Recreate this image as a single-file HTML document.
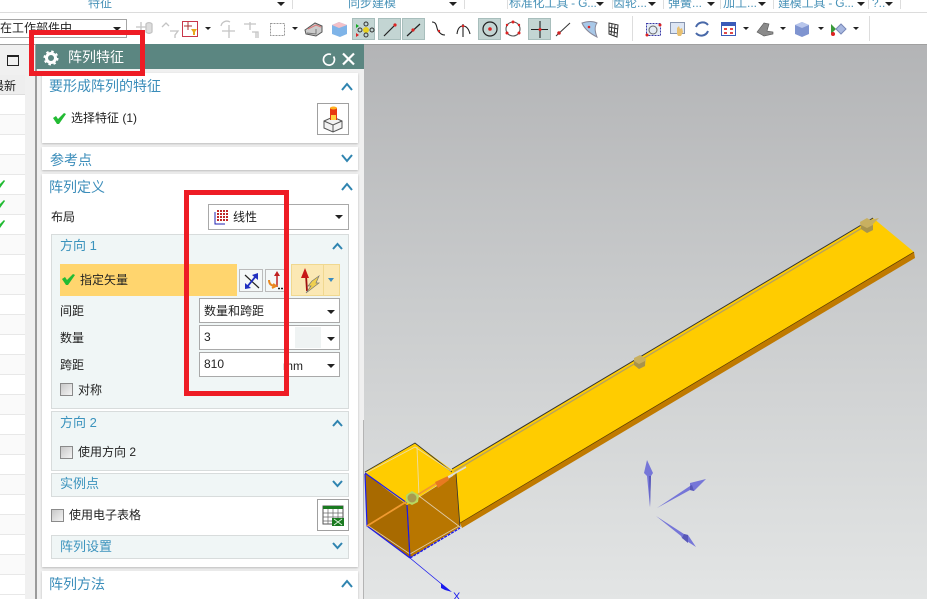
<!DOCTYPE html>
<html><head><meta charset="utf-8">
<style>
html,body{margin:0;padding:0;}
body{width:927px;height:599px;overflow:hidden;position:relative;background:#fff;font-family:"Liberation Sans","Noto Sans CJK SC",sans-serif;font-size:12px;color:#222;}
.a{position:absolute;}
.t{position:absolute;white-space:nowrap;line-height:16px;}
.h{color:#3b8dba;font-size:14px;}
.s{color:#3b93bd;font-size:13px;}
.box{position:absolute;box-sizing:border-box;}
.white{background:#fff;box-shadow:0 1px 2px #bbb;}
.sub{background:#f0f6f6;border:1px solid #d8dcdc;}
.inp{background:#fff;border:1px solid #a9a9a9;}
.cb{position:absolute;box-sizing:border-box;width:13px;height:13px;border:1px solid #8a8a8a;background:linear-gradient(135deg,#c8c8c8,#f4f4f4);}
.hi{position:absolute;top:18px;height:22px;background:#c3d5d3;border:1px solid #a8bebc;box-sizing:border-box;}
.arr{position:absolute;width:0;height:0;border-left:4px solid transparent;border-right:4px solid transparent;border-top:4px solid #222;}
.rib{position:absolute;top:-5px;font-size:12px;line-height:16px;color:#4a93b8;white-space:nowrap;}
.sep{position:absolute;top:0;height:9px;width:1px;background:#ddd;}
.rw{position:absolute;left:0;width:25px;height:20px;border-bottom:1px solid #e8e8e8;box-sizing:border-box;}
</style></head><body>

<!-- viewport -->
<div class="a" style="left:0;top:44px;width:927px;height:555px;background:linear-gradient(180deg,#b3b4b6 0%,#c9cbcc 45%,#e3e5e5 100%);"></div>
<svg class="a" style="left:0;top:0" width="927" height="599" viewBox="0 0 927 599">
  <polygon points="452,469 873,218 914,252 460,523" fill="#ffcc00"/>
  <polygon points="914,252 915,258 462,528 460,523" fill="#c07a00"/>
  <line x1="452" y1="469" x2="873" y2="218" stroke="#333" stroke-width="1"/>
  <line x1="460" y1="523" x2="914" y2="252" stroke="#5a3c00" stroke-width=".7"/>
  <line x1="453" y1="472" x2="862" y2="228" stroke="#b9a35c" stroke-width="1.400"/>
  <polygon points="365,472 415,443 456,473 407,505" fill="#ffcc00"/>
  <polygon points="365,473 407,505 410,558 367,526" fill="#a86a00"/>
  <polygon points="407,505 456,474 460,527 410,558" fill="#b87600"/>
  <path d="M365,472 L415,443 L452,472 M456,473 L460,527 M407,505 L410,558" stroke="#333" stroke-width=".8" fill="none"/>
  <path d="M366,473 L415,447 L451,471 M417,447 L419,496 L460,527 M367,525 L410,554 L459,526" stroke="#e8e0d0" stroke-width=".9" fill="none" opacity=".8"/>
  <path d="M365,474 L367,526 L410,558 M407,505 L410,558 M365,473 L407,503" stroke="#1a1aee" stroke-width="1.200" fill="none"/>
  <path d="M410,558 L460,528" stroke="#1a1aee" stroke-width="1.400" stroke-dasharray="3 1" fill="none"/>
  <line x1="410" y1="558" x2="450" y2="591" stroke="#1a1aee" stroke-width=".8"/>
  <polygon points="441,583 452,592 445,590 441,588" fill="#1a1aee"/>
  <text x="453" y="600" font-size="11" fill="#1a1aee" font-family="Liberation Sans">X</text>
  <line x1="367" y1="526" x2="440" y2="481" stroke="#f09a30" stroke-width="1.800"/>
  <polygon points="435,482 448,476 449,480 438,488" fill="#e87a20"/>
  <line x1="448" y1="477" x2="466" y2="467" stroke="#dcdcdc" stroke-width="1.600"/>
  <polygon points="412,491 419,495 418,502 412,505 406,502 406,495" fill="#b8d860"/>
  <circle cx="412" cy="498" r="4.500" fill="#a89a50"/>
  <g fill="#c8b060"><polygon points="634,358 640,355 646,359 645,366 639,369 634,365"/>
  <polygon points="860,222 867,218 873,222 873,230 867,233 861,229"/><polygon points="870,220 879,218 873,224"/></g>
  <g fill="#a8944c"><polygon points="634,361 639,364 645,361 645,366 639,369 634,365"/><polygon points="861,225 867,228 873,225 873,230 867,233 861,229"/></g>
  <g fill="#7676d8">
    <polygon points="650,507 647,476 644,473 647,460 653,473 651,476"/>
    <polygon points="657,508 690,490 694,491 706,479 690,483 690,486"/>
    <polygon points="656,516 684,534 688,535 696,547 682,538 681,536"/>
  </g>
  <g fill="#5858b8"><polygon points="650,507 649,476 651,476"/><polygon points="690,486 690,490 694,491 692,485"/><polygon points="682,538 688,543 688,535 684,534"/></g>
</svg>

<!-- top ribbon -->
<div class="a" style="left:0;top:0;width:927px;height:44px;background:#fff;"></div>
<div class="a" style="left:0;top:12px;width:927px;height:1px;background:#dcdcdc;"></div>
<div class="a" style="left:0;top:44px;width:927px;height:1px;background:#a0a0a0;"></div>
<div class="rib" style="left:88px;">特征</div><div class="arr" style="left:277px;top:2px;"></div><div class="sep" style="left:292px;"></div>
<div class="rib" style="left:348px;">同步建模</div><div class="arr" style="left:449px;top:2px;"></div><div class="sep" style="left:464px;"></div>
<div class="sep" style="left:507px;"></div><div class="rib" style="left:509px;letter-spacing:-.2px;">标准化工具 - G...</div><div class="arr" style="left:596px;top:2px;"></div>
<div class="sep" style="left:612px;"></div><div class="rib" style="left:613px;">齿轮...</div><div class="arr" style="left:648px;top:2px;"></div>
<div class="sep" style="left:663px;"></div><div class="rib" style="left:668px;">弹簧...</div><div class="arr" style="left:707px;top:2px;"></div>
<div class="sep" style="left:720px;"></div><div class="rib" style="left:723px;">加工...</div><div class="arr" style="left:758px;top:2px;"></div>
<div class="sep" style="left:773px;"></div><div class="rib" style="left:778px;letter-spacing:-.2px;">建模工具 - G...</div><div class="arr" style="left:857px;top:2px;"></div>
<div class="sep" style="left:868px;"></div><div class="rib" style="left:872px;">?..</div><div class="arr" style="left:885px;top:2px;"></div>
<div class="sep" style="left:900px;"></div>

<!-- toolbar -->
<div class="box" style="left:-2px;top:19px;width:129px;height:19px;border:1px solid #a5a5a5;background:#fff;"></div>
<div class="t" style="left:0;top:20px;">在工作部件中</div>
<div class="arr" style="left:113px;top:27px;"></div>
<div class="hi" style="left:352px;width:23px;"></div>
<div class="hi" style="left:378px;width:23px;"></div>
<div class="hi" style="left:402px;width:23px;"></div>
<div class="hi" style="left:478px;width:23px;"></div>
<div class="hi" style="left:528px;width:23px;"></div>
<div class="a" style="left:632px;top:16px;width:1px;height:25px;background:#ddd;"></div>
<div class="a" style="left:869px;top:16px;width:1px;height:25px;background:#ddd;"></div>
<svg class="a" style="left:0;top:0" width="927" height="44" viewBox="0 0 927 44">
  <g fill="none" stroke="#c4c4c4" stroke-width="1.300">
    <path d="M136,27 h10 M141,22 v11"/><path d="M146,24 a4,4 0 0 1 6,0 v8 a4,4 0 0 1 -6,0z" fill="#ddd"/>
    <path d="M162,27 l4,-4 l3,3 M170,31 h8 l-3,4 v3"/>
    <path d="M221,26 a6,6 0 0 1 9,-4 M222,31 h13 M229,25 v13"/>
    <path d="M244,24 h12 M250,22 v8 M252,32 h6 v6 M256,32 v6"/>
  </g>
  <rect x="182.500" y="21.500" width="15" height="15" fill="#fff" stroke="#c8374a"/>
  <path d="M184,26 h8 M188,22 v8" stroke="#a33" fill="none"/><path d="M191,29 h6 l-2,3 v3 h-2 v-3z" fill="#e8a820"/>
  <polygon points="205,27 211,27 208,30" fill="#222"/>
  <rect x="270.500" y="23.500" width="14" height="12" fill="none" stroke="#999" stroke-dasharray="2 1"/>
  <polygon points="292,27 298,27 295,30" fill="#222"/>
  <path d="M305,30 l10,-7 l7,3 v6 l-6,4 l-10,-2z" fill="#ccc" stroke="#555"/><path d="M308,29 l8,-4 l5,2" stroke="#d77" fill="none"/><path d="M307,33 l9,1 v-5" stroke="#777" fill="none"/>
  <path d="M332,25 l7,-3 l8,3 v9 l-7,3 l-8,-3z" fill="#7fb4e8"/><path d="M332,25 l7,-3 l8,3 l-8,3z" fill="#f4c0c8"/>
  <circle cx="366" cy="30" r="3" fill="#e8d020"/><g fill="none" stroke="#333"><circle cx="366" cy="24" r="2"/><circle cx="366" cy="35" r="2"/><circle cx="360" cy="30" r="2"/><circle cx="372" cy="30" r="2"/></g><path d="M356,24 l3,2 l-3,2z" fill="#1a2"/><path d="M356,33 l3,2 l-3,2z" fill="#d22"/>
  <line x1="384" y1="36" x2="396" y2="24" stroke="#222" stroke-width="1.200"/><circle cx="395" cy="25" r="1.600" fill="#d22"/>
  <line x1="407" y1="36" x2="420" y2="24" stroke="#222" stroke-width="1.200"/><circle cx="413" cy="30" r="1.600" fill="#d22"/>
  <path d="M432,22 c6,0 4,8 7,10 c2,2 3,3 6,3" fill="none" stroke="#222" stroke-width="1.100"/><circle cx="439" cy="31" r="1.200" fill="#d22"/>
  <path d="M457,34 q1,-8 6,-8 q5,0 7,8 M463,24 v13" fill="none" stroke="#222" stroke-width="1.100"/><circle cx="463" cy="26" r="1.300" fill="#d22"/>
  <circle cx="490" cy="29" r="7" fill="none" stroke="#222" stroke-width="1.200"/><circle cx="490" cy="29" r="1.800" fill="#d22"/>
  <circle cx="513" cy="29" r="7" fill="none" stroke="#555" stroke-width="1.100"/><g fill="#d22"><circle cx="513" cy="22" r="1.500"/><circle cx="507" cy="33" r="1.500"/><circle cx="519" cy="33" r="1.500"/><circle cx="507" cy="25" r="1.200"/><circle cx="519" cy="25" r="1.200"/></g>
  <path d="M531,29.500 h17 M540,21 v17" stroke="#222" stroke-width="1.100"/><circle cx="540" cy="29.500" r="1.500" fill="#d22"/>
  <line x1="556" y1="36" x2="570" y2="23" stroke="#333" stroke-width="1"/><circle cx="559" cy="33" r="1.800" fill="#c22"/>
  <path d="M582,23 c6,-2 11,-2 15,0 c-3,4 -2,9 0,14 c-6,-3 -12,-7 -15,-14z" fill="#a8c8e8" stroke="#889"/><circle cx="589" cy="27" r="1.300" fill="#d22"/>
  <path d="M609,23 l9,2 l-1,12 l-8,-3z M609,27 l9,2 M609,31 l8,2 M612,24 l-1,11 M615,25 l-1,11" fill="#fff" stroke="#333"/>
  <rect x="646.500" y="23.500" width="14" height="12" fill="#e4ecf4" stroke="#3a3aa8" stroke-dasharray="2 1"/><circle cx="653" cy="30" r="4" fill="none" stroke="#666"/><circle cx="660" cy="25" r="1.500" fill="#d22"/><circle cx="647" cy="35" r="1.500" fill="#d22"/>
  <rect x="670.500" y="22.500" width="14" height="11" fill="#dde6f4" stroke="#8896b0"/><path d="M677,34 l0,-6 l2,-2 l1,3 l2,-1 l1,4 l-2,4 h-3z" fill="#e8c070"/>
  <path d="M696,27 a7,7 0 0 1 12,-2 M708,31 a7,7 0 0 1 -12,2" fill="none" stroke="#4868a8" stroke-width="2"/>
  <rect x="721.500" y="22.500" width="14" height="13" fill="#fff" stroke="#3a5ab8"/><rect x="722" y="23" width="13" height="3" fill="#3a5ab8"/><g fill="#e04848"><rect x="724" y="28" width="3" height="2"/><rect x="730" y="28" width="3" height="2"/><rect x="724" y="32" width="3" height="2"/><rect x="730" y="32" width="3" height="2"/></g>
  <polygon points="743,27 749,27 746,30" fill="#222"/>
  <path d="M757,32 l7,-9 l5,1 l-2,7 l6,1 l0,2 l-9,2z" fill="#8a8a8a" stroke="#555" stroke-width=".6"/>
  <polygon points="780,27 786,27 783,30" fill="#222"/>
  <path d="M795,25 l7,-3 l7,3 v9 l-7,3 l-7,-3z" fill="#7f94d0"/><path d="M795,25 l7,-3 l7,3 l-7,3z" fill="#b8c6ec"/>
  <polygon points="818,27 824,27 821,30" fill="#222"/>
  <path d="M831,24 l5,5 l-5,5z" fill="#3a9a3a"/><path d="M836,29 l5,-5 l5,5 l-5,5z" fill="#a8b8e0" stroke="#7888b8"/><circle cx="833" cy="34" r="2" fill="#d22"/>
  <polygon points="853,27 859,27 856,30" fill="#222"/>
</svg>

<!-- left list -->
<div class="a" style="left:0;top:45px;width:36px;height:554px;background:#f0f0f0;"></div>
<div class="box" style="left:7px;top:55px;width:12px;height:11px;border:1px solid #222;border-top-width:2px;"></div>
<div class="a" style="left:0;top:75px;width:25px;height:20px;background:#eee;border-bottom:1px solid #ddd;box-sizing:border-box;"></div>
<div class="t" style="left:-1px;top:78px;width:17px;overflow:hidden;direction:rtl;">最新</div>
<div class="a" style="left:0;top:95px;width:25px;height:504px;background:#fff;"></div>
<div class="rw" style="top:95px"></div><div class="rw" style="top:115px;background:#fafafa"></div><div class="rw" style="top:135px"></div><div class="rw" style="top:155px;background:#fafafa"></div><div class="rw" style="top:175px"></div><div class="rw" style="top:195px;background:#fafafa"></div><div class="rw" style="top:215px"></div><div class="rw" style="top:235px;background:#fafafa"></div><div class="rw" style="top:255px"></div><div class="rw" style="top:275px;background:#fafafa"></div><div class="rw" style="top:295px"></div><div class="rw" style="top:315px;background:#fafafa"></div><div class="rw" style="top:335px"></div><div class="rw" style="top:355px;background:#fafafa"></div><div class="rw" style="top:375px"></div><div class="rw" style="top:395px;background:#fafafa"></div><div class="rw" style="top:415px"></div><div class="rw" style="top:435px;background:#fafafa"></div><div class="rw" style="top:455px"></div><div class="rw" style="top:475px;background:#fafafa"></div><div class="rw" style="top:495px"></div><div class="rw" style="top:515px;background:#fafafa"></div><div class="rw" style="top:535px"></div><div class="rw" style="top:555px;background:#fafafa"></div><div class="rw" style="top:575px"></div>
<svg class="a" style="left:0;top:175px" width="10" height="60"><g fill="#22bb33"><polygon points="-4,9 -1,7 0,9 4,5 5,6 0,13 -1,13"/><polygon points="-4,29 -1,27 0,29 4,25 5,26 0,33 -1,33"/><polygon points="-4,49 -1,47 0,49 4,45 5,46 0,53 -1,53"/></g></svg>

<!-- dialog -->
<div class="a" style="left:35px;top:45px;width:2px;height:554px;background:#9a9a9a;"></div>
<div class="a" style="left:37px;top:69px;width:327px;height:530px;background:#f0f0f0;"></div>
<div class="a" style="left:363px;top:420px;width:1px;height:179px;background:#b4b4b4;"></div>
<div class="a" style="left:36px;top:44px;width:328px;height:25px;background:#5b8681;"></div>
<div class="t" style="left:68px;top:49px;color:#fff;font-size:14px;">阵列特征</div>
<svg class="a" style="left:36px;top:44px" width="328" height="25">
  <circle cx="15" cy="14" r="4.500" fill="none" stroke="#fff" stroke-width="3"/>
  <circle cx="15" cy="14" r="6.500" fill="none" stroke="#fff" stroke-width="2" stroke-dasharray="2.500 2.600"/>
  <path d="M295,10.500 a5.500,5.500 0 1 0 2.500,2" fill="none" stroke="#fff" stroke-width="1.700"/>
  <path d="M307,9.500 l11,11 M318,9.500 l-11,11" stroke="#fff" stroke-width="2.200"/>
</svg>

<div class="box white" style="left:42px;top:73px;width:316px;height:70px;"></div>
<div class="box white" style="left:42px;top:147px;width:316px;height:23px;"></div>
<div class="box white" style="left:42px;top:174px;width:316px;height:393px;"></div>
<div class="box white" style="left:42px;top:571px;width:316px;height:28px;"></div>

<div class="t h" style="left:49px;top:78px;">要形成阵列的特征</div>
<div class="t" style="left:71px;top:110px;">选择特征 (1)</div>
<div class="box" style="left:317px;top:103px;width:32px;height:32px;border:1px solid #a0a0a0;background:#fff;"></div>
<div class="t h" style="left:50px;top:152px;">参考点</div>
<div class="t h" style="left:49px;top:179px;">阵列定义</div>
<div class="t" style="left:51px;top:209px;">布局</div>
<div class="box inp" style="left:208px;top:204px;width:141px;height:26px;"></div>
<div class="t" style="left:233px;top:209px;">线性</div>
<div class="arr" style="left:335px;top:215px;"></div>

<div class="box sub" style="left:51px;top:234px;width:298px;height:175px;"></div>
<div class="t s" style="left:60px;top:238px;">方向 1</div>
<div class="a" style="left:60px;top:264px;width:177px;height:32px;background:#ffd56e;"></div>
<div class="t" style="left:80px;top:272px;">指定矢量</div>
<div class="box" style="left:239px;top:269px;width:24px;height:23px;border:1px solid #bbb;background:#f4f8f8;"></div>
<div class="box" style="left:265px;top:269px;width:24px;height:23px;border:1px solid #bbb;background:#f4f8f8;"></div>
<div class="box" style="left:291px;top:264px;width:49px;height:32px;border:1px solid #f0d890;background:#fbe8b4;"></div>
<div class="a" style="left:323px;top:265px;width:1px;height:30px;background:#f0d890;"></div>
<div class="t" style="left:60px;top:303px;">间距</div>
<div class="box inp" style="left:199px;top:298px;width:141px;height:25px;"></div>
<div class="t" style="left:204px;top:303px;">数量和跨距</div>
<div class="arr" style="left:327px;top:310px;"></div>
<div class="t" style="left:60px;top:330px;">数量</div>
<div class="box inp" style="left:199px;top:325px;width:141px;height:25px;"></div>
<div class="a" style="left:295px;top:327px;width:26px;height:21px;background:#eff3f3;"></div>
<div class="t" style="left:204px;top:329px;">3</div>
<div class="arr" style="left:327px;top:337px;"></div>
<div class="t" style="left:60px;top:357px;">跨距</div>
<div class="box inp" style="left:199px;top:352px;width:141px;height:25px;"></div>
<div class="t" style="left:204px;top:356px;">810</div>
<div class="t" style="left:283px;top:358px;">mm</div>
<div class="arr" style="left:327px;top:364px;"></div>
<div class="cb" style="left:60px;top:383px;"></div>
<div class="t" style="left:78px;top:382px;">对称</div>

<div class="box sub" style="left:51px;top:411px;width:298px;height:60px;"></div>
<div class="t s" style="left:60px;top:415px;">方向 2</div>
<div class="cb" style="left:60px;top:446px;"></div>
<div class="t" style="left:78px;top:444px;">使用方向 2</div>
<div class="box sub" style="left:51px;top:473px;width:298px;height:24px;"></div>
<div class="t s" style="left:60px;top:476px;">实例点</div>
<div class="cb" style="left:51px;top:509px;"></div>
<div class="t" style="left:69px;top:507px;">使用电子表格</div>
<div class="box" style="left:317px;top:499px;width:32px;height:32px;border:1px solid #a0a0a0;background:#fff;"></div>
<div class="box sub" style="left:51px;top:535px;width:298px;height:24px;"></div>
<div class="t s" style="left:60px;top:539px;">阵列设置</div>
<div class="t h" style="left:49px;top:576px;">阵列方法</div>

<svg class="a" style="left:0;top:0" width="927" height="599" viewBox="0 0 927 599">
  <g fill="none" stroke="#2f84b0" stroke-width="2">
    <path d="M342,90 L347,84 L352,90"/><path d="M342,155 L347,161 L352,155"/><path d="M342,190 L347,184 L352,190"/><path d="M342,587 L347,581 L352,587"/>
    <path d="M333,249 L337.500,244 L342,249"/><path d="M333,426 L337.500,421 L342,426"/><path d="M333,481 L337.500,486 L342,481"/><path d="M333,543 L337.500,548 L342,543"/>
  </g>
  <g fill="#22bb33">
    <polygon points="53,118 56,116 58,119 64,113 66,114 59,124 57,124"/>
    <polygon points="62,279 65,277 67,280 73,274 75,275 68,285 66,285"/>
  </g>
  <!-- feature button icon -->
  <path d="M324,121 L333,117 L342,121 V128 L333,132 L324,128z" fill="#f2f2f2" stroke="#555"/>
  <path d="M324,121 L333,125 L342,121 M333,125 V132" fill="none" stroke="#555"/>
  <rect x="330" y="108" width="7" height="12" fill="#e83810"/><rect x="331" y="115" width="5" height="5" fill="#ffd040"/>
  <ellipse cx="333.500" cy="108" rx="3.500" ry="1.500" fill="#ffb020"/>
  <!-- linear icon -->
  <g fill="#c02828"><rect x="217" y="210" width="2" height="2"/><rect x="220" y="210" width="2" height="2"/><rect x="223" y="210" width="2" height="2"/><rect x="226" y="210" width="2" height="2"/><rect x="217" y="213" width="2" height="2"/><rect x="220" y="213" width="2" height="2"/><rect x="223" y="213" width="2" height="2"/><rect x="226" y="213" width="2" height="2"/><rect x="217" y="216" width="2" height="2"/><rect x="220" y="216" width="2" height="2"/><rect x="223" y="216" width="2" height="2"/><rect x="226" y="216" width="2" height="2"/><rect x="217" y="219" width="2" height="2"/><rect x="220" y="219" width="2" height="2"/><rect x="223" y="219" width="2" height="2"/><rect x="226" y="219" width="2" height="2"/></g>
  <path d="M215,212 V224 H225" fill="none" stroke="#2020b0"/>
  <!-- reverse icon -->
  <line x1="245" y1="275" x2="259" y2="288" stroke="#222" stroke-width="1.200"/>
  <line x1="247" y1="287" x2="256" y2="276" stroke="#2030c0" stroke-width="1.800"/>
  <polygon points="258,273 258,280 252,275" fill="#2030c0"/><polygon points="245,289 245,283 251,288" fill="#2030c0"/>
  <!-- csys icon -->
  <line x1="277" y1="275" x2="277" y2="287" stroke="#c02020" stroke-width="1.500"/><polygon points="277,271 274,276 280,276" fill="#c02020"/>
  <path d="M269,280 q0,6 7,6 M272,288 l4,-2 l-3,-2" fill="none" stroke="#e88820" stroke-width="2"/>
  <path d="M278,288.500 h2 M281,288.500 h2 M284,288.500 h2" stroke="#222" stroke-width="1.500"/>
  <!-- vector -->
  <line x1="306" y1="275" x2="307" y2="291" stroke="#a01010" stroke-width="1.800"/><polygon points="305,268 301,278 309,278" fill="#c81818"/>
  <path d="M312,281 L319,276 L316,283 L319,283 L306,293 L311,286 L308,286z" fill="#f0d050" stroke="#777" stroke-width=".7"/>
  <polygon points="328,278 334,278 331,282" fill="#3a8cc0"/>
  <!-- spreadsheet icon -->
  <rect x="323" y="506" width="20" height="18" fill="#fff" stroke="#555"/><rect x="323" y="506" width="20" height="3" fill="#1a7a20"/>
  <path d="M323,513 h20 M323,517 h20 M323,521 h20 M328,509 v15 M333,509 v15 M338,509 v15" stroke="#666" stroke-width=".7"/>
  <path d="M332,518 h12 v8 h-12z" fill="#1a7a20"/><path d="M334,519 l8,6 M342,519 l-8,6" stroke="#d8f0d8"/>
  <!-- red annotation rectangles -->
  <rect x="31.500" y="32.500" width="111" height="41" fill="none" stroke="#ee1c25" stroke-width="5"/>
  <rect x="186.500" y="192.500" width="100" height="201" fill="none" stroke="#ee1c25" stroke-width="5"/>
</svg>
</body></html>
